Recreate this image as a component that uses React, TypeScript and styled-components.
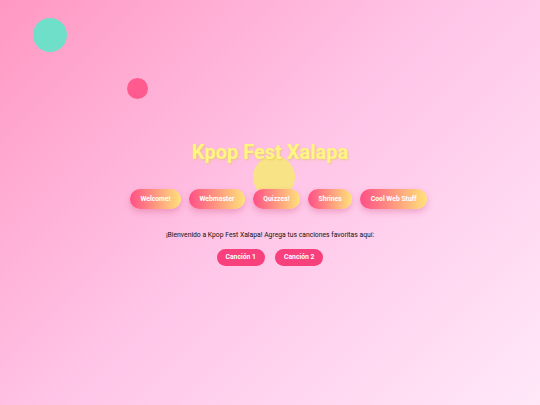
import React from 'react';
import styled, { createGlobalStyle } from 'styled-components';

const GlobalStyle = createGlobalStyle`
    html, body {
        margin: 0;
        padding: 0;
    }
    body {
        font-family: Roboto, "Noto Sans", sans-serif;
        background: linear-gradient(135deg, #ff98c2 0%, #ffc6e8 50%, #ffe8f8 100%);
        min-height: 100vh;
    }
`;

const Page = styled.div`
    position: relative;
    min-height: 100vh;
    display: flex;
    flex-direction: column;
    align-items: center;
    justify-content: center;
    overflow: hidden;
`;

interface BubbleProps {
    readonly size: number;
    readonly left: number;
    readonly top: number;
    readonly color: string;
}

const Bubble = styled.div<BubbleProps>`
    position: absolute;
    width: ${(p) => p.size}px;
    height: ${(p) => p.size}px;
    left: ${(p) => p.left}px;
    top: ${(p) => p.top}px;
    border-radius: 50%;
    background: ${(p) => p.color};
    z-index: 0;
`;

const Title = styled.h1`
    position: relative;
    z-index: 1;
    margin: 0 0 24px;
    font-size: 20px;
    font-weight: 700;
    color: #fff684;
    text-shadow: 1px 1px 2px rgba(225, 195, 60, 0.6);
`;

const Nav = styled.nav`
    position: relative;
    z-index: 1;
    display: flex;
    gap: 8px;
    margin: 1px 0 22px 17px;
`;

const NavButton = styled.button`
    height: 20px;
    padding: 0 10.5px;
    border: none;
    border-radius: 10px;
    background: linear-gradient(90deg, #ff4f86 0%, #ffe27a 100%);
    color: #fff;
    font-family: Roboto, sans-serif;
    font-size: 6.8px;
    font-weight: 700;
    box-shadow: 0 3px 6px rgba(200, 60, 110, 0.3);
    cursor: pointer;
`;

const Intro = styled.p`
    position: relative;
    z-index: 1;
    margin: 0 0 10px;
    font-size: 6.8px;
    color: #111;
`;

const Songs = styled.div`
    position: relative;
    z-index: 1;
    display: flex;
    gap: 10px;
`;

const SongButton = styled.button`
    height: 17px;
    padding: 0 9px;
    border: none;
    border-radius: 9px;
    background: #f7407c;
    color: #fff;
    font-family: Roboto, sans-serif;
    font-size: 6.8px;
    font-weight: 700;
    cursor: pointer;
`;

const links = ['Welcome!', 'Webmaster', 'Quizzes!', 'Shrines', 'Cool Web Stuff'];

const App = () => {
    return (
        <>
            <GlobalStyle />
            <Page>
                <Bubble size={34} left={33} top={18} color="#6fdfc9" />
                <Bubble size={21} left={127} top={78} color="#ff5b8f" />
                <Bubble size={42} left={253} top={156} color="#f8e387" />
                <Title>Kpop Fest Xalapa</Title>
                <Nav>
                    {links.map((l) => (
                        <NavButton key={l}>{l}</NavButton>
                    ))}
                </Nav>
                <Intro>¡Bienvenido a Kpop Fest Xalapa! Agrega tus canciones favoritas aquí:</Intro>
                <Songs>
                    <SongButton>Canción 1</SongButton>
                    <SongButton>Canción 2</SongButton>
                </Songs>
            </Page>
        </>
    );
};

export default App;
